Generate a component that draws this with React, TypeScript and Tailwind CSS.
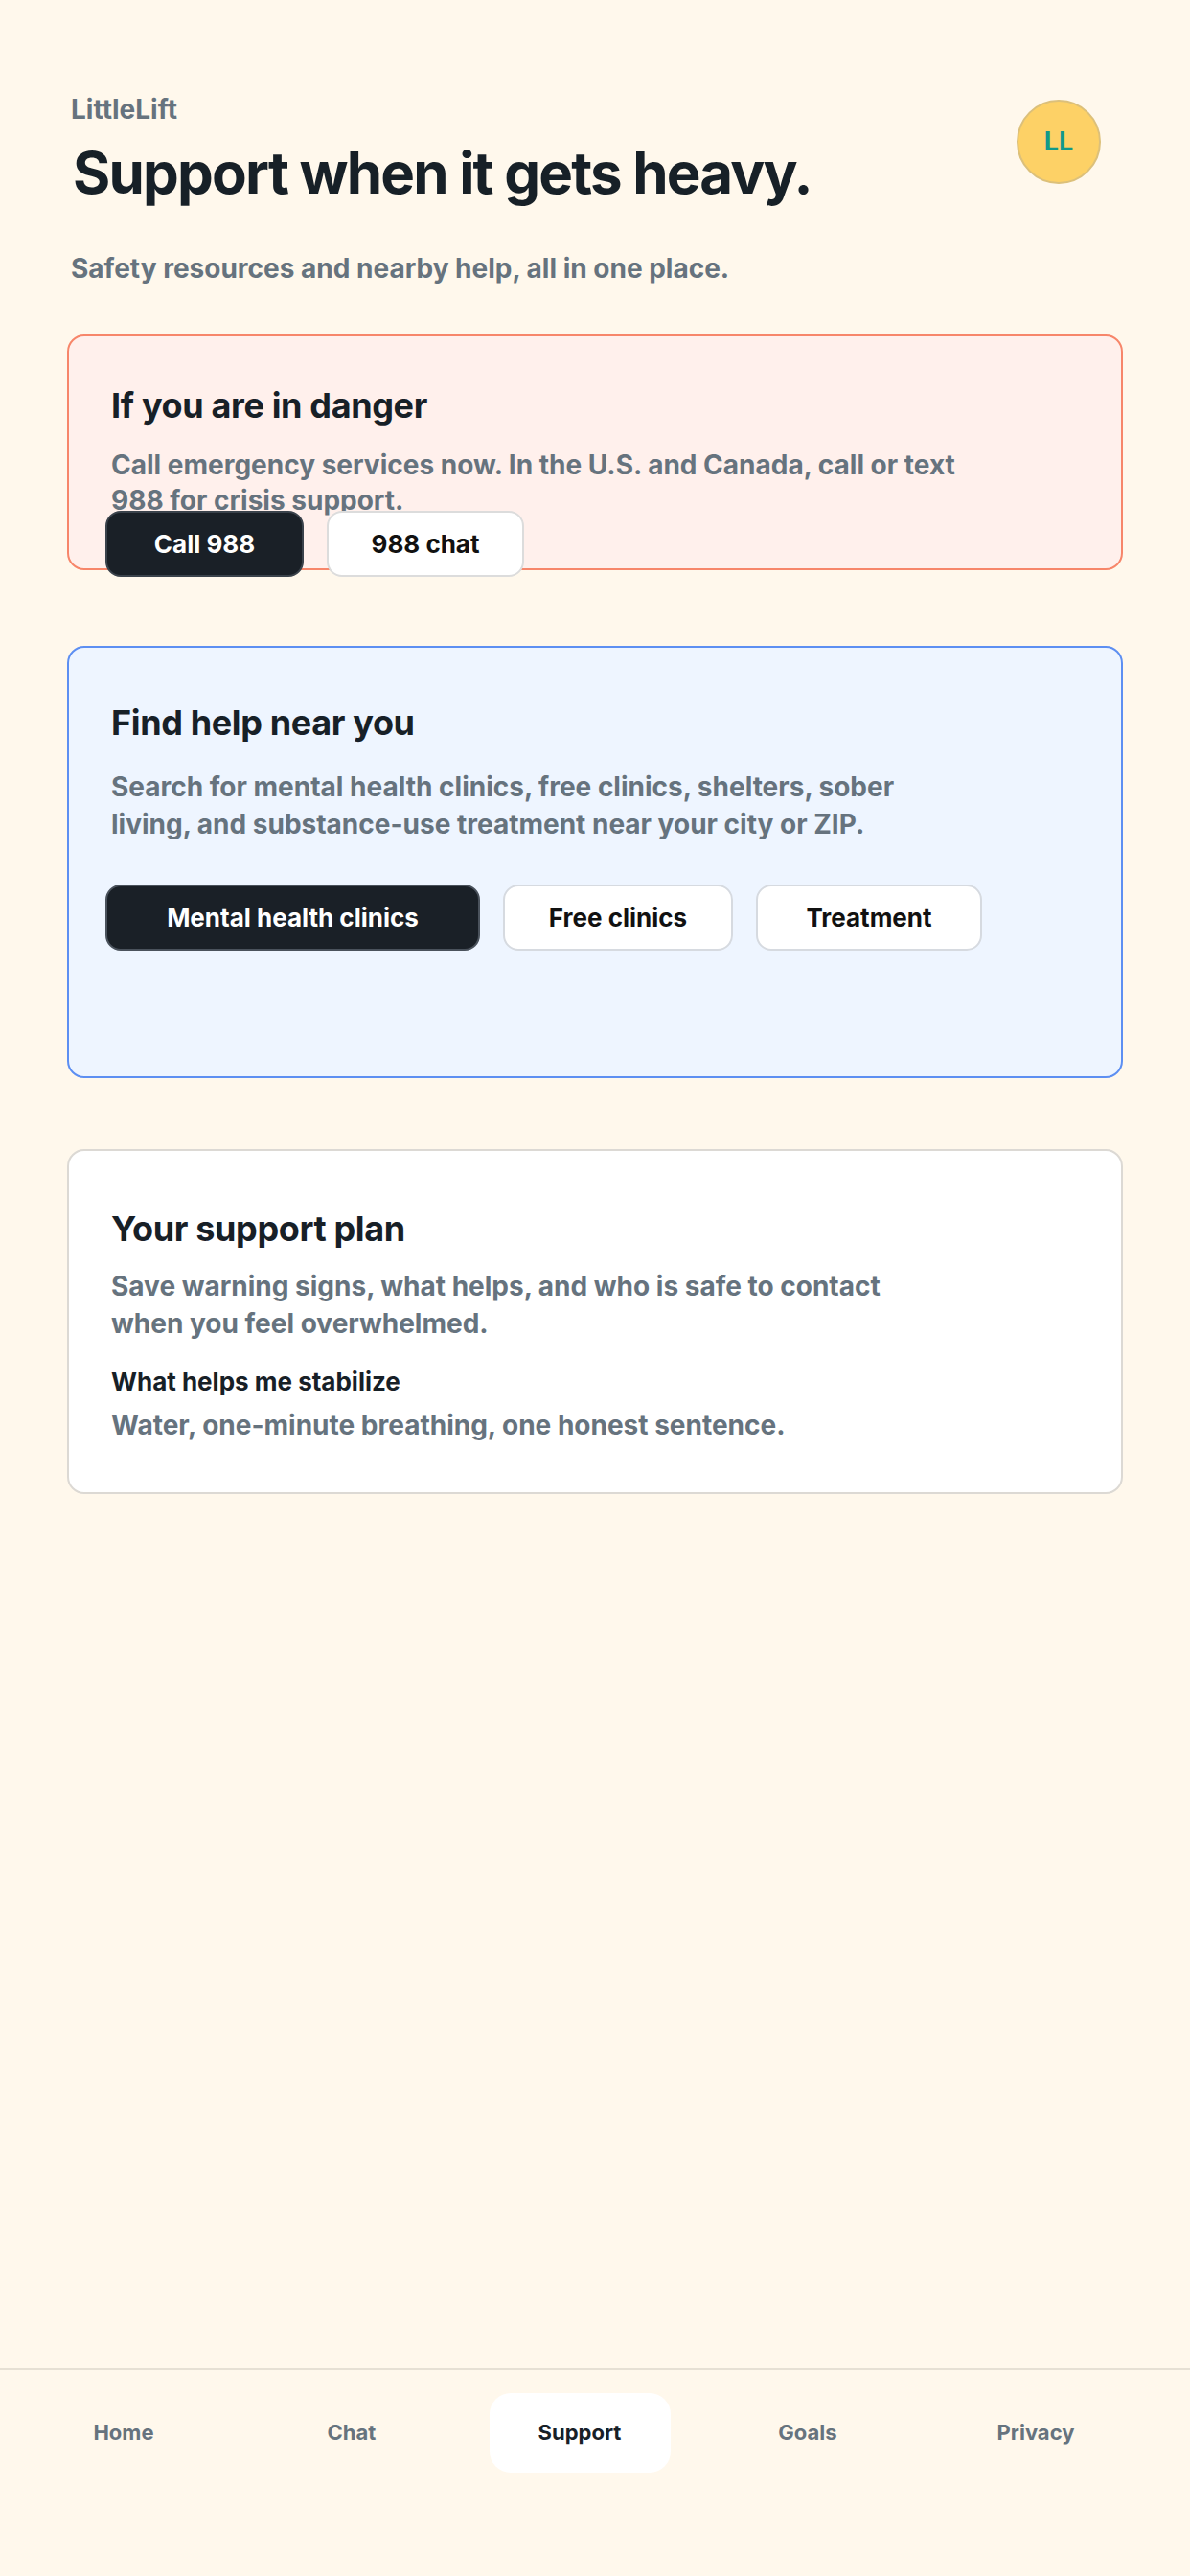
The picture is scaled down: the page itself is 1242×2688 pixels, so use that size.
import React, { useState } from 'react';

const navItems = ['Home', 'Chat', 'Support', 'Goals', 'Privacy'];

const helpFilters = [
  { id: 'mental', label: 'Mental health clinics', width: 'w-[391px]' },
  { id: 'free', label: 'Free clinics', width: 'w-[240px]' },
  { id: 'treatment', label: 'Treatment', width: 'w-[236px]' },
];

export default function App() {
  const [activeTab, setActiveTab] = useState('Support');
  const [filter, setFilter] = useState('mental');

  return (
    <div className="min-h-screen flex flex-col bg-[#fff8ec] font-[Inter,sans-serif] text-[#172027]">
      <main className="flex-1 px-[70px]">
        {/* Header */}
        <header className="flex items-start justify-between pt-[98px] pl-[4px] pr-[23px]">
          <div>
            <p className="text-[28px] leading-[1.2] font-bold text-[#66737e]">LittleLift</p>
            <h1 className="mt-[12px] ml-[2px] text-[60px] leading-[1.2] font-bold tracking-[-0.03em] text-[#172027]">
              Support when it gets heavy.
            </h1>
          </div>
          <div className="mt-[6px] w-[88px] h-[88px] rounded-full bg-[#fdd166] border-2 border-[#dcc07a] flex items-center justify-center">
            <span className="text-[27px] font-bold text-[#11998a]">LL</span>
          </div>
        </header>

        <p className="mt-[48px] pl-[4px] text-[28px] leading-[1.2] font-bold text-[#66737e]">
          Safety resources and nearby help, all in one place.
        </p>

        {/* Danger card */}
        <section className="mt-[52px] h-[246px] rounded-[18px] border-2 border-[#f7866a] bg-[#fff0ec] pt-[51px] px-[44px]">
          <h2 className="text-[36px] leading-[1.2] font-bold tracking-[-0.01em]">If you are in danger</h2>
          <p className="mt-[22px] max-w-[900px] text-[28px] leading-[37px] font-bold text-[#66737e]">
            Call emergency services now. In the U.S. and Canada, call or text
            <br />
            988 for crisis support.
          </p>
          <div className="mt-[-8px] -ml-[6px] flex gap-[24px]">
            <button className="w-[207px] h-[69px] rounded-[16px] bg-[#1a2027] border-2 border-[#3a424b] text-[26px] font-bold text-white">
              Call 988
            </button>
            <button className="w-[206px] h-[69px] rounded-[16px] bg-white border-2 border-[#dcdcdc] text-[26px] font-bold text-[#111]">
              988 chat
            </button>
          </div>
        </section>

        {/* Find help card */}
        <section className="mt-[79px] h-[451px] rounded-[18px] border-2 border-[#5d8ff2] bg-[#eef5ff] pt-[57px] px-[44px]">
          <h2 className="text-[36px] leading-[1.2] font-bold tracking-[-0.01em]">Find help near you</h2>
          <p className="mt-[26px] max-w-[900px] text-[28px] leading-[39px] font-bold text-[#66737e]">
            Search for mental health clinics, free clinics, shelters, sober
            <br />
            living, and substance-use treatment near your city or ZIP.
          </p>
          <div className="mt-[43px] -ml-[6px] flex gap-[24px]">
            {helpFilters.map((f) => (
              <button
                key={f.id}
                onClick={() => setFilter(f.id)}
                className={`${f.width} h-[69px] rounded-[16px] border-2 text-[26px] font-bold ${
                  filter === f.id
                    ? 'bg-[#1a2027] border-[#4a525c] text-white'
                    : 'bg-white border-[#d6dae0] text-[#111]'
                }`}
              >
                {f.label}
              </button>
            ))}
          </div>
        </section>

        {/* Support plan card */}
        <section className="mt-[74px] h-[360px] rounded-[18px] border-2 border-[#dcd9d4] bg-white pt-[60px] px-[44px]">
          <h2 className="text-[36px] leading-[1.2] font-bold tracking-[-0.01em]">Your support plan</h2>
          <p className="mt-[19px] max-w-[900px] text-[28px] leading-[39px] font-bold text-[#66737e]">
            Save warning signs, what helps, and who is safe to contact
            <br />
            when you feel overwhelmed.
          </p>
          <h3 className="mt-[25px] text-[26px] leading-[1.2] font-bold">What helps me stabilize</h3>
          <p className="mt-[13px] text-[28px] leading-[1.2] font-bold text-[#66737e]">
            Water, one-minute breathing, one honest sentence.
          </p>
        </section>
      </main>

      {/* Bottom nav */}
      <nav className="border-t-2 border-[#e6e0d4] pt-[24px] pb-[108px] pl-[10px] pr-[42px] grid grid-cols-5">
        {navItems.map((item) => (
          <div key={item} className="flex justify-center">
            <button
              onClick={() => setActiveTab(item)}
              className={`w-[189px] h-[83px] rounded-[22px] text-[22px] font-bold ${
                activeTab === item ? 'bg-white text-[#172027]' : 'text-[#66737e]'
              }`}
            >
              {item}
            </button>
          </div>
        ))}
      </nav>
    </div>
  );
}
